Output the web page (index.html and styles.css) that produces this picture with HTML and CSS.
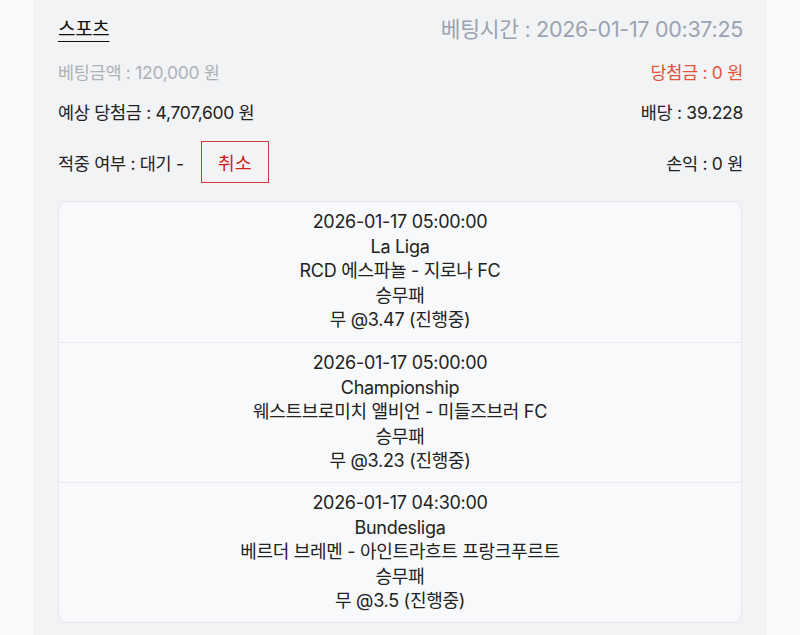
FILE: index.html
```html
<!DOCTYPE html>
<html lang="ko">
<head>
<meta charset="utf-8">
<link rel="stylesheet" href="styles.css">
</head>
<body>
<div class="panel">
  <div class="row row-head">
    <span class="title">스포츠</span>
    <span class="time">베팅시간 : 2026-01-17 00:37:25</span>
  </div>
  <div class="row row-2">
    <span class="muted">베팅금액 : 120,000 원</span>
    <span class="win">당첨금 : 0 원</span>
  </div>
  <div class="row row-3">
    <span>예상 당첨금 : 4,707,600 원</span>
    <span>배당 : 39.228</span>
  </div>
  <div class="row row-4">
    <span class="status">적중 여부 : 대기 - <button class="cancel">취소</button></span>
    <span>손익 : 0 원</span>
  </div>
  <div class="card">
    <div class="game">
      <div>2026-01-17 05:00:00</div>
      <div>La Liga</div>
      <div>RCD 에스파뇰 - 지로나 FC</div>
      <div>승무패</div>
      <div>무 @3.47 (진행중)</div>
    </div>
    <div class="game">
      <div>2026-01-17 05:00:00</div>
      <div>Championship</div>
      <div>웨스트브로미치 앨비언 - 미들즈브러 FC</div>
      <div>승무패</div>
      <div>무 @3.23 (진행중)</div>
    </div>
    <div class="game">
      <div>2026-01-17 04:30:00</div>
      <div>Bundesliga</div>
      <div>베르더 브레멘 - 아인트라흐트 프랑크푸르트</div>
      <div>승무패</div>
      <div>무 @3.5 (진행중)</div>
    </div>
  </div>
</div>
</body>
</html>
```
FILE: styles.css
```css
html, body {
  margin: 0;
  padding: 0;
  background: #f9fafb;
}
body {
  font-family: Inter, "Noto Sans CJK KR", sans-serif;
  color: #222;
  height: 635px;
  overflow: hidden;
}
.panel {
  margin-left: 33px;
  width: 734px;
  height: 635px;
  box-sizing: border-box;
  background: #f2f3f5;
  padding: 12px 24px 0 25px;
  font-size: 17.5px;
  letter-spacing: -0.3px;
}
.row {
  display: flex;
  justify-content: space-between;
  align-items: center;
}
.row-head {
  height: 30px;
}
.title {
  font-size: 19px;
  text-decoration: underline;
  text-underline-offset: 5px;
  text-decoration-thickness: 1px;
  color: #111;
}
.time {
  font-size: 21.5px;
  color: #9aa3b1;
}
.row-2 {
  margin-top: 16px;
  height: 26px;
}
.muted {
  color: #adb1b7;
}
.win {
  color: #e5533d;
}
.row-3 {
  margin-top: 14px;
  height: 26px;
}
.row-4 {
  margin-top: 17px;
  height: 42px;
}
.status {
  display: flex;
  align-items: center;
}
.cancel {
  margin-left: 17px;
  width: 68px;
  height: 42px;
  border: 1.5px solid #d23a3a;
  background: transparent;
  color: #d21f1f;
  font-family: inherit;
  font-size: 18.5px;
  padding: 0;
}
.card {
  margin-top: 18px;
  width: 684px;
  box-sizing: border-box;
  background: #f8f9fb;
  border: 1px solid #e3e5e8;
  border-radius: 9px;
}
.game {
  height: 140px;
  box-sizing: border-box;
  padding: 8px 0 10px;
  text-align: center;
  line-height: 24.5px;
  font-size: 18px;
}
.game + .game {
  border-top: 1px solid #e8eaed;
}
```
